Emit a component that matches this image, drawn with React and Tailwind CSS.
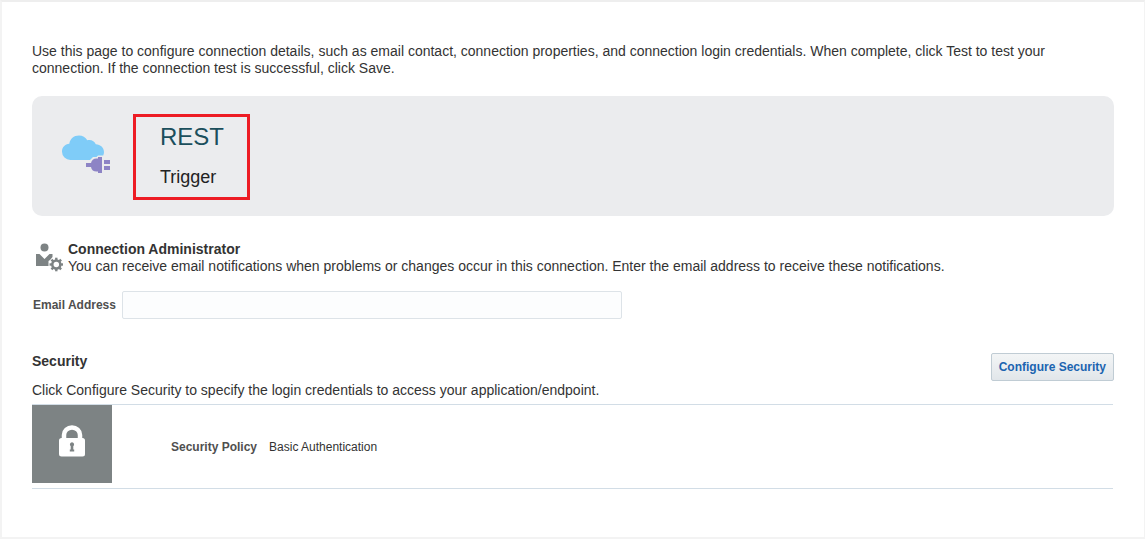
import React from "react";

function CloudPlugIcon() {
  return (
    <svg width="49" height="40" viewBox="0 0 49 40" className="mb-0.5 shrink-0" aria-hidden="true">
      <path
        fill="#7fccf8"
        d="M8.500 25A8.400 8.400 0 0 1 0 16.500C0 12.400 3 9.200 7.300 8.800C8 4 11.800 0.500 17 0.500C20.500 0.500 23.600 2.200 25.300 5.200C29.500 4.300 32.500 6.300 33.800 9.300C38.500 9.500 42 12.800 42 17C42 18.300 41.700 19.500 41.200 20.500H36L34.500 22H31L28 25Z"
      />
      <path
        fill="#8d84c5"
        d="M24 28H29C29.500 25.500 31.500 23.500 34.500 23.500H36V22H40V38H36V36.500H34.500C31.500 36.500 29.500 35 29 32H24ZM42 25H48V29H42ZM42 31H48V35H42Z"
      />
    </svg>
  );
}

function AdminIcon() {
  const teeth = [0, 45, 90, 135, 180, 225, 270, 315];
  return (
    <svg width="28" height="30" viewBox="0 0 28 30" className="shrink-0" fill="#7d8384" aria-hidden="true">
      <circle cx="9.500" cy="4.500" r="4" />
      <path d="M1 11H4.500L9.500 16L14.500 11H17.500V14L15 17L13.500 18V23H1Z" />
      <circle cx="21.300" cy="21.500" r="4" fill="none" stroke="#7d8384" strokeWidth="2.500" />
      {teeth.map((angle) => (
        <path key={angle} d="M20.100 14.700H22.500V17.500H20.100Z" transform={`rotate(${angle} 21.300 21.500)`} />
      ))}
    </svg>
  );
}

function LockIcon() {
  return (
    <svg width="28" height="32" viewBox="0 0 28 32" aria-hidden="true">
      <path d="M6 14V10A8 7.500 0 0 1 22 10V14" fill="none" stroke="#fff" strokeWidth="4.500" />
      <rect x="1" y="13" width="26" height="18.500" rx="2.500" fill="#fff" />
      <path d="M14 17.300A2.200 2.200 0 0 1 15.300 21.200V24.500H16.200V26.500H11.800V24.500H12.700V21.200A2.200 2.200 0 0 1 14 17.300Z" fill="#7d8384" />
    </svg>
  );
}

export default function App() {
  return (
    <main className="min-h-screen border-2 border-r border-[#f3f3f3] border-t-[#eeeeee] bg-white px-[30px] pt-[41px] pb-12 font-['Liberation_Sans',Arial,sans-serif] text-sm leading-[17px] text-[#333333]">
      <p>
        Use this page to configure connection details, such as email contact, connection properties, and connection
        login credentials. When complete, click Test to test your connection. If the connection test is successful,
        click Save.
      </p>

      <header className="mt-[19px] flex min-h-[120px] items-center gap-[22px] rounded-[10px] bg-[#ebecee] px-[30px]">
        <CloudPlugIcon />
        <div className="mt-0.5 border-3 border-[#ed1c24] pt-1.5 pr-[23px] pb-1.5 pl-6">
          <h1 className="text-2xl leading-7 text-[#1b4f5c]">REST</h1>
          <p className="mt-4 mb-1 text-lg leading-5 text-[#222222]">Trigger</p>
        </div>
      </header>

      <section className="mt-[25px]">
        <div className="flex items-center gap-[5px] pl-[3px]">
          <AdminIcon />
          <div>
            <h2 className="font-bold">Connection Administrator</h2>
            <p>
              You can receive email notifications when problems or changes occur in this connection. Enter the email
              address to receive these notifications.
            </p>
          </div>
        </div>
        <div className="mt-4 flex items-center gap-1.5 pl-px">
          <label htmlFor="email" className="text-xs font-bold text-[#4f4f4f]">
            Email Address
          </label>
          <input
            id="email"
            type="email"
            className="h-7 w-full max-w-[500px] rounded-xs border border-[#dde3e8] bg-[#fcfdfe] px-2 text-xs outline-none"
          />
        </div>
      </section>

      <section className="mt-[34px]">
        <div className="flex items-start justify-between">
          <h2 className="font-bold">Security</h2>
          <button
            type="button"
            className="h-7 rounded-xs border border-[#c0ccd4] bg-linear-to-b from-[#f3f5f6] to-[#e1e6ea] px-[7px] text-xs font-bold text-[#1b64b0]"
          >
            Configure Security
          </button>
        </div>
        <p className="mt-px">Click Configure Security to specify the login credentials to access your application/endpoint.</p>
        <div className="mt-[5px] mr-px flex items-start border-y border-[#d2dde6] pb-[5px]">
          <div className="flex h-[78px] w-20 items-center justify-center bg-[#7d8384] pb-1.5">
            <LockIcon />
          </div>
          <dl className="ml-[59px] flex gap-3 self-center pt-1.5 text-xs leading-4">
            <dt className="font-bold text-[#4f4f4f]">Security Policy</dt>
            <dd>Basic Authentication</dd>
          </dl>
        </div>
      </section>
    </main>
  );
}
